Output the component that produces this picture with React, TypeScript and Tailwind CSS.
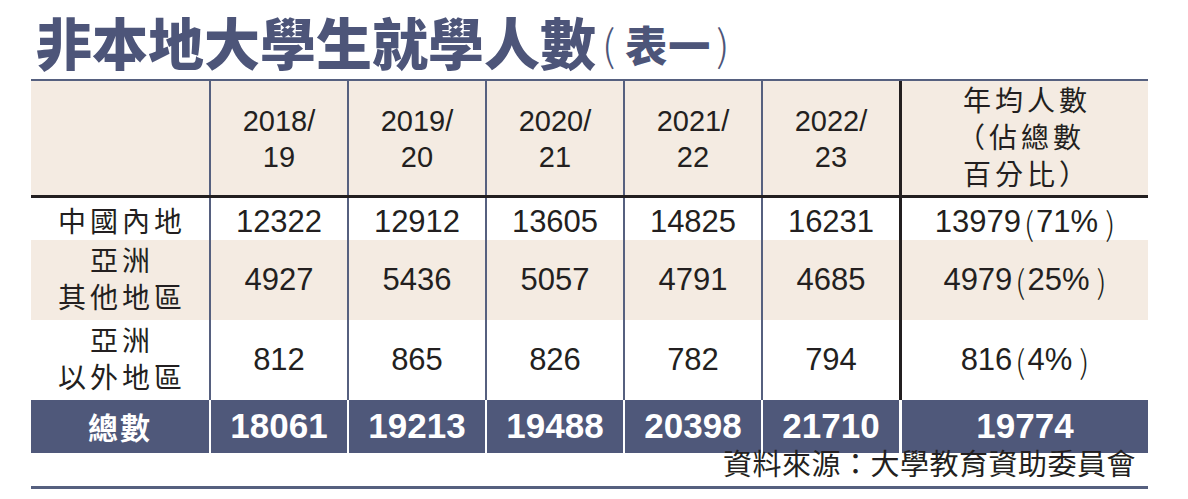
const sans = "font-['Liberation_Sans','Noto_Sans_CJK_TC',sans-serif]";
const cjk = "font-['Noto_Sans_CJK_TC','Noto_Sans_CJK_SC',sans-serif]";
const gridCols = "grid grid-cols-[178px_repeat(5,138px)_249px]";

const years = [
  ["2018/", "19"],
  ["2019/", "20"],
  ["2020/", "21"],
  ["2021/", "22"],
  ["2022/", "23"],
];

const rows = [
  { label: ["中國內地"], values: ["12322", "12912", "13605", "14825", "16231"], avg: ["13979", "71%"], tall: false, shade: false },
  { label: ["亞洲", "其他地區"], values: ["4927", "5436", "5057", "4791", "4685"], avg: ["4979", "25%"], tall: true, shade: true },
  { label: ["亞洲", "以外地區"], values: ["812", "865", "826", "782", "794"], avg: ["816", "4%"], tall: true, shade: false },
];

const totals = ["18061", "19213", "19488", "20398", "21710"];

function Label({ lines }: { lines: string[] }) {
  return (
    <div className="flex flex-col items-center justify-center leading-[37px] text-[28px] tracking-[4px] pl-[4px]">
      {lines.map((l) => (
        <span key={l}>{l}</span>
      ))}
    </div>
  );
}

function Avg({ n, pct }: { n: string; pct: string }) {
  return (
    <span className="flex items-center">
      {n}
      <span className={`${cjk} font-light text-[32px] pl-[3px] pr-[2px]`}>(</span>
      {pct}
      <span className={`${cjk} font-light text-[32px] pl-[7px]`}>)</span>
    </span>
  );
}

export default function App() {
  return (
    <div className={`w-[1188px] h-[499px] bg-white text-[#231f20] ${sans}`}>
      <div className="ml-[31px] w-[1117px]">
        <div className="h-[79px] pt-[13px] pl-[5px]">
          <h1 className={`${cjk} flex items-center h-[56px] text-[56px] leading-[56px] text-[#4d5579] whitespace-nowrap`}>
            <span className="font-black">非本地大學生就學人數</span>
            <span className="font-light text-[42px] pl-[6px] pr-[10px] pt-[4px]">(</span>
            <span className="font-black text-[42px] tracking-[1px] pt-[6px]">表一</span>
            <span className="font-light text-[42px] pl-[5px] pt-[4px]">)</span>
          </h1>
        </div>

        <div className="border-t-2 border-[#56607f]">
          {/* header */}
          <div className={`${gridCols} h-[117px] bg-[#f4ebe2] border-b-[3px] border-[#231f20]`}>
            <div />
            {years.map((y) => (
              <div
                key={y[0]}
                className="border-l-2 border-[#56607f] flex flex-col items-center justify-center text-[29px] leading-[36px] pt-[2px]"
              >
                <span>{y[0]}</span>
                <span>{y[1]}</span>
              </div>
            ))}
            <div className="border-l-[3px] border-[#231f20] flex flex-col items-center justify-center text-[28px] leading-[37px] tracking-[4px] pl-[4px]">
              <span>年均人數</span>
              <span className="-ml-[12px]">（佔總數</span>
              <span>百分比）</span>
            </div>
          </div>

          {/* body */}
          {rows.map((r) => (
            <div
              key={r.avg[0]}
              className={`${gridCols} ${r.tall ? "h-[80px]" : "h-[42px]"} ${r.shade ? "bg-[#f4ebe2]" : "bg-white"}`}
            >
              <Label lines={r.label} />
              {r.values.map((v, i) => (
                <div
                  key={i}
                  className="border-l-2 border-[#56607f] flex items-center justify-center text-[31px]"
                >
                  {v}
                </div>
              ))}
              <div className="border-l-[3px] border-[#231f20] flex items-center justify-center text-[31px]">
                <Avg n={r.avg[0]} pct={r.avg[1]} />
              </div>
            </div>
          ))}

          {/* totals */}
          <div className={`${gridCols} h-[43px] text-white font-bold`}>
            <div className={`${cjk} bg-[#4f587a] flex items-center justify-center text-[30px] tracking-[2px]`}>
              總數
            </div>
            {totals.map((t) => (
              <div
                key={t}
                className="bg-[#4f587a] border-l-2 border-white flex items-center justify-center text-[35px]"
              >
                {t}
              </div>
            ))}
            <div className="bg-[#4f587a] border-l-[3px] border-white flex items-center justify-center text-[35px]">
              19774
            </div>
          </div>

          {/* source */}
          <div className="h-[46px] flex items-center justify-end pr-[12px] pt-[2px] border-b-[3px] border-[#56607f] text-[29px] tracking-[0.5px]">
            資料來源：大學教育資助委員會
          </div>
        </div>
      </div>
    </div>
  );
}
